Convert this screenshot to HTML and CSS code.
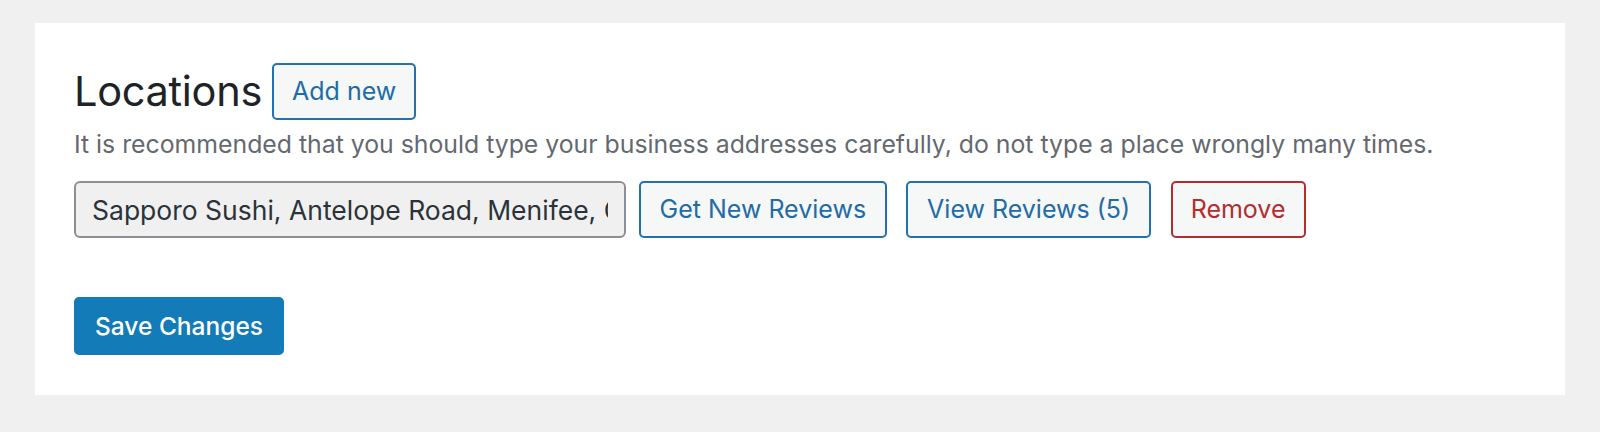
FILE: index.html
```html
<!DOCTYPE html>
<html lang="en">
<head>
<meta charset="utf-8">
<title>Locations</title>
<link rel="stylesheet" href="styles.css">
</head>
<body>
<div class="panel">
  <div class="title-row">
    <h1 class="title">Locations</h1>
    <button class="btn btn-add">Add new</button>
  </div>
  <p class="desc">It is recommended that you should type your business addresses carefully, do not type a place wrongly many times.</p>
  <div class="loc-row">
    <input class="loc-input" type="text" value="Sapporo Sushi, Antelope Road, Menifee, CA, USA" readonly>
    <button class="btn btn-get">Get New Reviews</button>
    <button class="btn btn-view">View Reviews (5)</button>
    <button class="btn btn-remove">Remove</button>
  </div>
  <div class="submit-row">
    <button class="btn-primary">Save Changes</button>
  </div>
</div>
</body>
</html>
```

FILE: styles.css
```css
html, body {
  margin: 0;
  padding: 0;
  background: #f0f0f1;
}
body {
  font-family: Inter, Roboto, "Liberation Sans", sans-serif;
  padding: 23px 35px 0;
}
.panel {
  background: #ffffff;
  height: 372px;
  box-sizing: border-box;
  padding: 40px 39px 39px;
}
.title-row {
  display: flex;
  align-items: center;
  height: 57px;
}
.title {
  margin: 0;
  font-size: 41.5px;
  font-weight: 400;
  color: #1d2327;
  line-height: 57px;
  margin-right: 10px;
  letter-spacing: -0.3px;
}
.btn {
  box-sizing: border-box;
  height: 57px;
  padding: 0 19px;
  border: 2px solid #2271b1;
  border-radius: 5px;
  background: #f6f7f7;
  color: #1f6ca6;
  font-family: inherit;
  font-size: 25px;
  line-height: 53px;
  white-space: nowrap;
}
.btn-add {
  padding: 0 18px;
}
.desc {
  margin: 7px 0 0;
  font-size: 24.8px;
  line-height: 34px;
  color: #646970;
}
.loc-row {
  display: flex;
  align-items: center;
  margin-top: 20px;
}
.loc-input {
  box-sizing: border-box;
  width: 552px;
  height: 57px;
  padding: 0 16px;
  border: 2px solid #8c8f94;
  border-radius: 6px;
  background: #f0f0f1;
  color: #2c3338;
  font-family: inherit;
  font-size: 26.5px;
  margin-right: 13px;
}
.btn-get {
  padding: 0 18.5px;
  margin-right: 19.5px;
}
.btn-view {
  margin-right: 19.5px;
}
.btn-remove {
  padding: 0 18px;
  border-color: #b32d2e;
  color: #b32d2e;
}
.submit-row {
  margin-top: 59px;
}
.btn-primary {
  box-sizing: border-box;
  height: 58px;
  padding: 0 19px;
  border: 2px solid #127bb8;
  border-radius: 5px;
  background: #127bb8;
  color: #ffffff;
  font-family: inherit;
  font-size: 24.5px;
  font-weight: 500;
}
```
